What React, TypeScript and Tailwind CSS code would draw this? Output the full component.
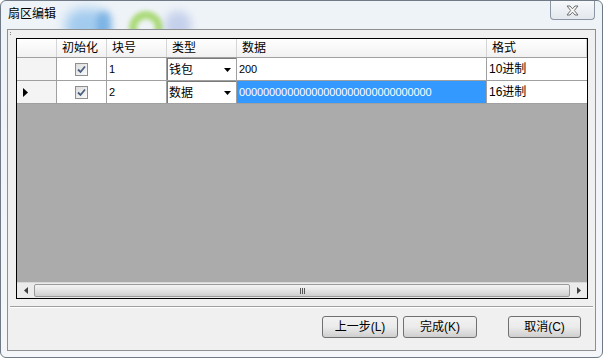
import React from 'react';

const font = "font-['Liberation_Sans','Noto_Sans_CJK_SC',sans-serif]";

const columns = [
  { key: 'init', label: '初始化', width: 'w-[50px]' },
  { key: 'no', label: '块号', width: 'w-[60px]' },
  { key: 'type', label: '类型', width: 'w-[70px]' },
  { key: 'data', label: '数据', width: 'w-[250px]' },
  { key: 'fmt', label: '格式', width: 'flex-1' },
];

const rows = [
  { no: '1', type: '钱包', data: '200', fmt: '10进制', current: false },
  { no: '2', type: '数据', data: '00000000000000000000000000000000', fmt: '16进制', current: true },
];

function CheckBox() {
  return (
    <div className="w-[13px] h-[13px] border border-[#8e8f8f] bg-gradient-to-br from-[#dcdcdc] to-[#fbfbfb] flex items-center justify-center">
      <svg width="9" height="9" viewBox="0 0 9 9">
        <path d="M1 4.5 L3.5 7 L8 1.5" fill="none" stroke="#4a5f80" strokeWidth="1.8" />
      </svg>
    </div>
  );
}

function Row({ row }: { row: (typeof rows)[number] }) {
  return (
    <div className="flex h-[23px] border-b border-[#a0a0a0]">
      <div className="w-[40px] border-r border-[#a0a0a0] bg-[#f4f4f4] flex items-center pl-[6px]">
        {row.current && (
          <svg width="5" height="9" viewBox="0 0 5 9">
            <path d="M0 0 L5 4.5 L0 9 Z" fill="#000" />
          </svg>
        )}
      </div>
      <div className="w-[50px] border-r border-[#a0a0a0] bg-white flex items-center justify-center">
        <CheckBox />
      </div>
      <div className="w-[60px] border-r border-[#a0a0a0] bg-white flex items-center pl-[2px] text-[11px]">
        {row.no}
      </div>
      <div className="w-[70px] border-r border-[#a0a0a0] bg-white flex">
        <div className="flex-1 flex items-center justify-between border-l border-t border-[#7a7a7a] pl-[1px] pr-[5px] text-[12px]">
          <span>{row.type}</span>
          <svg width="7" height="4" viewBox="0 0 7 4">
            <path d="M0 0 L7 0 L3.5 4 Z" fill="#000" />
          </svg>
        </div>
      </div>
      <div
        className={`w-[250px] border-r border-[#a0a0a0] flex items-center pl-[2px] text-[11px] tracking-[-0.1px] ${
          row.current ? 'bg-[#3399ff] text-white' : 'bg-white'
        }`}
      >
        {row.data}
      </div>
      <div className="flex-1 bg-white flex items-center pl-[2px] text-[12px]">{row.fmt}</div>
    </div>
  );
}

function ScrollBar() {
  return (
    <div className="h-[16px] flex bg-[#ebebeb] border-t border-[#d8d8d8]">
      <div className="w-[17px] flex items-center justify-center">
        <svg width="4" height="7" viewBox="0 0 4 7">
          <path d="M4 0 L0 3.5 L4 7 Z" fill="#404040" />
        </svg>
      </div>
      <div className="flex-1 flex items-center py-[1px]">
        <div className="h-full w-full rounded-[2px] border border-[#9a9a9a] bg-gradient-to-b from-[#f4f4f4] via-[#e4e4e4] to-[#cfcfcf] flex items-center justify-center gap-[1px]">
          <div className="w-[1px] h-[6px] bg-[#555]" />
          <div className="w-[1px] h-[6px] bg-[#555]" />
          <div className="w-[1px] h-[6px] bg-[#555]" />
        </div>
      </div>
      <div className="w-[17px] flex items-center justify-center">
        <svg width="4" height="7" viewBox="0 0 4 7">
          <path d="M0 0 L4 3.5 L0 7 Z" fill="#404040" />
        </svg>
      </div>
    </div>
  );
}

function Button({ label, width }: { label: string; width: string }) {
  return (
    <button
      className={`${width} h-[22px] rounded-[3px] border border-[#707070] bg-gradient-to-b from-[#f2f2f2] via-[#ebebeb] to-[#cfcfcf] text-[12px] text-black flex items-center justify-center`}
    >
      {label}
    </button>
  );
}

export default function App() {
  return (
    <div className={`w-[603px] h-[358px] bg-white ${font} text-black`}>
      <div className="h-full w-full rounded-[6px] border border-[#6f7a86] bg-gradient-to-b from-[#eef3f8] to-[#f4f6f9] flex flex-col overflow-hidden">
        {/* title bar */}
        <div className="relative h-[28px] flex items-start justify-between">
          <div className="absolute left-[64px] top-[8px] w-[44px] h-[34px] rounded-full bg-[#8fc1ec] opacity-80 blur-[6px]" />
          <div className="absolute left-[96px] top-[10px] w-[14px] h-[30px] rounded-full bg-[#5a9edc] opacity-60 blur-[3px]" />
          <div className="absolute left-[128px] top-[10px] w-[34px] h-[34px] rounded-full border-[8px] border-[#a0d664] opacity-85 blur-[2px]" />
          <div className="absolute left-[164px] top-[10px] w-[26px] h-[30px] rounded-full bg-[#b4c2e6] opacity-70 blur-[4px]" />
          <span className="relative pl-[7px] pt-[6px] text-[12px] leading-[14px]">扇区编辑</span>
          <div className="relative mr-[7px] w-[45px] h-[19px] rounded-b-[4px] border border-t-0 border-[#8c96a2] bg-gradient-to-b from-[#f6f8fa] to-[#e3e8ee] flex items-center justify-center">
            <svg width="13" height="11" viewBox="0 0 13 11">
              <path
                d="M1 1 L4 1 L6.5 3.8 L9 1 L12 1 L8.3 5.5 L12 10 L9 10 L6.5 7.2 L4 10 L1 10 L4.7 5.5 Z"
                fill="#fafafa"
                stroke="#6d6d6d"
                strokeWidth="1"
                strokeLinejoin="round"
              />
            </svg>
          </div>
        </div>

        {/* client area */}
        <div className="relative mx-[6px] h-[322px] border border-[#8d8f91] bg-[#f0f0f0] flex flex-col">
          <div className="relative pl-[8px] pt-[8px]">
            <div className="absolute left-[2px] top-[2px] flex flex-col gap-[1px]">
              <div className="w-[1px] h-[1px] bg-[#888]" />
              <div className="w-[1px] h-[1px] bg-[#888]" />
            </div>
            {/* grid */}
            <div className="w-[572px] h-[261px] border border-black flex flex-col">
              <div className="flex h-[19px] border-b border-[#a0a0a0] bg-gradient-to-b from-white to-[#f1f1f1] text-[12px]">
                <div className="w-[40px] border-r border-[#d5d5d5]" />
                {columns.map((col) => (
                  <div
                    key={col.key}
                    className={`${col.width} border-r border-[#d5d5d5] flex items-center pl-[5px]`}
                  >
                    {col.label}
                  </div>
                ))}
              </div>
              {rows.map((row) => (
                <Row key={row.no} row={row} />
              ))}
              <div className="flex-1 bg-[#ababab]" />
              <ScrollBar />
            </div>
          </div>

          <div className="mt-[7px] mx-[2px] h-[2px] border-t border-[#a0a0a0] border-b border-b-white" />

          <div className="mt-[8px] flex pl-[314px]">
            <Button label="上一步(L)" width="w-[76px]" />
            <div className="w-[5px]" />
            <Button label="完成(K)" width="w-[74px]" />
            <div className="w-[31px]" />
            <Button label="取消(C)" width="w-[73px]" />
          </div>
        </div>
      </div>
    </div>
  );
}
